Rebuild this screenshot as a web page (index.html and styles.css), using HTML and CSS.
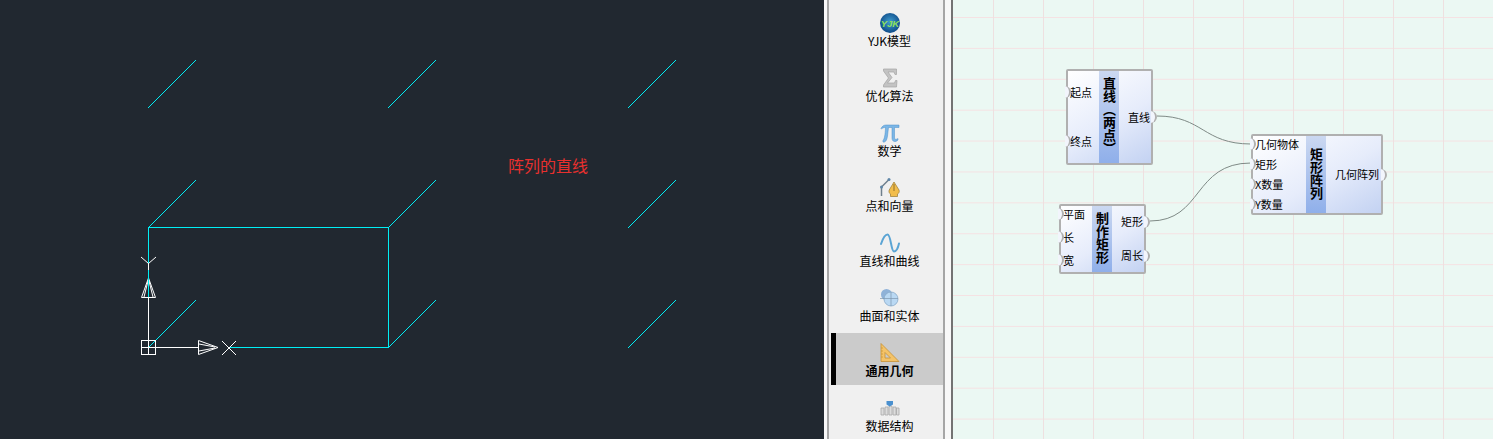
FILE: index.html
```html
<!DOCTYPE html>
<html lang="zh-CN">
<head>
  <meta charset="UTF-8">
  <title>矩形阵列</title>
  <link rel="stylesheet" href="styles.css">
</head>
<body>
  <div class="app">
    <div class="viewport">
      <svg class="cad" width="824" height="439" viewBox="0 0 824 439">
        <g class="cad-edge">
          <path d="M147.500 108.500L195.500 60.500M387.500 108.500L435.500 60.500M627.500 108.500L675.500 60.500"/>
          <path d="M147.500 228.500L195.500 180.500M387.500 228.500L435.500 180.500M627.500 228.500L675.500 180.500"/>
          <path d="M147.500 348.500L195.500 300.500M387.500 348.500L435.500 300.500M627.500 348.500L675.500 300.500"/>
          <path d="M148.500 227.500H388.500V347.500H229M148.500 227.500V263"/>
        </g>
        <g class="cad-ucs">
          <path class="crisp" d="M141.500 340.500H155.500V354.500H141.500ZM148.500 340.500V354.500M141.500 347.500H198M148.500 340V263"/>
          <path d="M141 257L148.500 263.500L156 257"/>
          <path d="M141.500 297.500H155.500L148.500 278ZM144 297L148 281M153 297L149 281"/>
          <path d="M198.500 340.500V354.500L218 347.500ZM199 344L215 347M199 351L215 348"/>
          <path d="M222 341L236 355M236 341L222 355"/>
        </g>
        <path class="cad-edge-top" d="M148.500 270V297"/>
        <text class="cad-label" x="508" y="172">阵列的直线</text>
      </svg>
    </div>

    <div class="toolbox">
      <div class="tabs">
        <div class="tab">
          <svg class="tab-icon" viewBox="0 0 20 20">
            <defs>
              <radialGradient id="globe" cx="50%" cy="45%" r="55%">
                <stop offset="0" stop-color="#3f9ed0"/>
                <stop offset="1" stop-color="#0d4a88"/>
              </radialGradient>
            </defs>
            <circle cx="10" cy="10" r="10" fill="url(#globe)"/>
            <text class="globe-text" x="10" y="13.500">YJK</text>
          </svg>
          <span>YJK模型</span>
        </div>
        <div class="tab">
          <svg class="tab-icon" viewBox="0 0 20 20">
            <path d="M3.500 1H16.500V6.500H15L14 4H8L12 9.500L7.500 15H14.500L15.500 12.500H17L16.500 19H3.500V17L8.500 10L3.500 3Z" fill="#c3c3c3" stroke="#a4a4a4" stroke-width=".7"/>
          </svg>
          <span>优化算法</span>
        </div>
        <div class="tab">
          <svg class="tab-icon" viewBox="0 0 20 20">
            <path d="M1 5.500C2 3.500 3.500 2 6 2H19V4.500H14.500V14C14.500 16.500 15.500 17 18 15.500V17C15.500 19.500 12 19 12 15V4.500H8.500L7.500 13C7 16.500 6 18.500 4.500 19C3 19.500 2.500 18.500 3 17.500C4.500 15.500 5.200 12 5.500 4.500C3.500 4.500 2.500 5 1.500 6Z" fill="#7bb6e6" stroke="#4a8fc8" stroke-width=".5"/>
          </svg>
          <span>数学</span>
        </div>
        <div class="tab">
          <svg class="tab-icon" viewBox="0 0 20 20">
            <path d="M1.500 18V9L9 1.500" fill="none" stroke="#6f7f8c" stroke-width="1.500"/>
            <circle cx="1.500" cy="9" r="1.500" fill="#5f86a8"/>
            <circle cx="9" cy="1.500" r="1.500" fill="#5f86a8"/>
            <path d="M14 4L19 12C19.800 14 18.500 15.500 17.500 16V18.500H10.500V16C9.500 15.500 8.500 14 9.200 12Z" fill="#f2bd4b" stroke="#9a7a32" stroke-width=".7"/>
            <path d="M14 6V13" stroke="#7a5d20" stroke-width=".8"/>
          </svg>
          <span>点和向量</span>
        </div>
        <div class="tab">
          <svg class="tab-icon" viewBox="0 0 20 20">
            <path d="M1 11C3 5 5 1.500 7.500 1.500C11 1.500 11 18.500 14 18.500C16 18.500 18 15 19 10.500" fill="none" stroke="#5aa4d4" stroke-width="2" stroke-linecap="round"/>
          </svg>
          <span>直线和曲线</span>
        </div>
        <div class="tab">
          <svg class="tab-icon" viewBox="0 0 20 20">
            <circle cx="6.500" cy="6.500" r="5.500" fill="#8fb2d8"/>
            <circle cx="11" cy="11" r="7" fill="#b9d8f3" stroke="#88a9c9" stroke-width=".8"/>
            <path d="M0 10.500H18M11 4V18" stroke="#7d96ad" stroke-width=".7"/>
          </svg>
          <span>曲面和实体</span>
        </div>
        <div class="tab tab-active">
          <svg class="tab-icon" viewBox="0 0 20 20">
            <path fill-rule="evenodd" d="M1 .5L19 18.500H1ZM5 9.500V15H10.500Z" fill="#f4c368" stroke="#c69236" stroke-width=".8"/>
            <path d="M1 5H3M1 8H3M1 11H3M1 14H3" stroke="#c69236" stroke-width=".7"/>
          </svg>
          <span>通用几何</span>
        </div>
        <div class="tab">
          <svg class="tab-icon" viewBox="0 0 20 20">
            <path d="M1 10H4V17H1ZM5 9H8V17H5ZM9 8H12V17H9ZM13 9H16V17H13ZM16.500 10H19V17H16.500Z" fill="#dcdcdc" stroke="#a8a8a8" stroke-width=".8"/>
            <path d="M6.500 3H13V6.500L9.750 8.500L6.500 6.500Z" fill="#4a90cf"/>
          </svg>
          <span>数据结构</span>
        </div>
      </div>
    </div>

    <div class="editor">
      <svg class="wires" width="540" height="439" viewBox="0 0 540 439">
        <path d="M204 116C250 116 250 144 298 144"/>
        <path d="M197 221C250 221 240 163 298 163"/>
      </svg>

      <div class="node node-line">
        <div class="ports ports-in">
          <div class="port">起点</div>
          <div class="port">终点</div>
        </div>
        <div class="node-name">直线（两点）</div>
        <div class="ports ports-out">
          <div class="port">直线</div>
        </div>
      </div>

      <div class="node node-rect">
        <div class="ports ports-in">
          <div class="port">平面</div>
          <div class="port">长</div>
          <div class="port">宽</div>
        </div>
        <div class="node-name">制作矩形</div>
        <div class="ports ports-out">
          <div class="port">矩形</div>
          <div class="port">周长</div>
        </div>
      </div>

      <div class="node node-array">
        <div class="ports ports-in">
          <div class="port">几何物体</div>
          <div class="port">矩形</div>
          <div class="port">X数量</div>
          <div class="port">Y数量</div>
        </div>
        <div class="node-name">矩形阵列</div>
        <div class="ports ports-out">
          <div class="port">几何阵列</div>
        </div>
      </div>
    </div>
  </div>
</body>
</html>
```

FILE: styles.css
```css
html, body {
  margin: 0;
  height: 100%;
  overflow: hidden;
}

body {
  font-family: "Noto Sans CJK SC", "Liberation Sans", sans-serif;
  color: #000;
}

.app {
  display: flex;
  height: 439px;
}

/* CAD viewport */
.viewport {
  width: 824px;
  flex: none;
  background-color: #212830;
}

.cad {
  display: block;
}

.cad path {
  fill: none;
  stroke-width: 1;
}

.cad .cad-edge-top,
.cad-edge path {
  stroke: #00eef4;
  shape-rendering: crispEdges;
}

.cad-ucs path {
  stroke: #fff;
}

.cad-ucs .crisp {
  shape-rendering: crispEdges;
}

.cad-label {
  fill: #e8302e;
  font-size: 16px;
}

/* component tabs */
.toolbox {
  width: 129px;
  flex: none;
  box-sizing: border-box;
  padding-left: 3px;
  background-color: #f8f8f8;
  border-right: 2px solid #737373;
}

.tabs {
  box-sizing: border-box;
  width: 118px;
  height: 100%;
  padding: 3px 0 0 2px;
  background-color: #f0f0f0;
  border-left: 2px solid #a6a6a6;
  border-right: 2px solid #a6a6a6;
  display: flex;
  flex-direction: column;
  gap: 3px;
}

.tab {
  flex: none;
  box-sizing: border-box;
  height: 52px;
  padding-top: 10px;
  border-left: 5px solid transparent;
  display: flex;
  flex-direction: column;
  align-items: center;
  font-size: 12px;
  line-height: 18px;
}

.tab span {
  margin-top: -1px;
}

.tab-active {
  background-color: #cbcbcb;
  border-left-color: #000;
  font-weight: bold;
}

.tab-icon {
  width: 20px;
  height: 20px;
  flex: none;
  margin-left: 1px;
}

.globe-text {
  fill: #8fe05a;
  font-size: 9.5px;
  font-weight: bold;
  font-style: italic;
  font-family: "Liberation Sans", sans-serif;
  text-anchor: middle;
}

/* node editor */
.editor {
  flex: 1;
  position: relative;
  background-color: #ebf8f3;
  background-image:
    linear-gradient(to right, #eee0e0 1px, transparent 1px),
    linear-gradient(to bottom, #f5e2e3 1px, transparent 1px);
  background-size: 50px 30.9px;
  background-position: 40px 17px;
}

.wires {
  position: absolute;
  left: 0;
  top: 0;
}

.wires path {
  fill: none;
  stroke: #7f8a86;
  stroke-width: 1;
}

.node {
  position: absolute;
  box-sizing: border-box;
  display: flex;
  border: 2px solid #b0b0b0;
  border-radius: 2px;
  font-size: 11px;
  line-height: 14px;
  background: linear-gradient(150deg, #ffffff 0%, #e6ecfb 55%, #c3d2f2 100%);
}

.node-line {
  left: 113px;
  top: 69px;
  width: 87px;
  height: 96px;
}

.node-rect {
  left: 106px;
  top: 204px;
  width: 87px;
  height: 70px;
}

.node-array {
  left: 298px;
  top: 134px;
  width: 132px;
  height: 81px;
}

.ports {
  display: flex;
  flex-direction: column;
  justify-content: center;
  white-space: nowrap;
  box-sizing: border-box;
}

.ports-in {
  width: 31px;
  padding: 0 0 2px 2px;
}

.ports-out {
  flex: 1;
  padding: 0 0 1px 9px;
  position: relative;
}

.node-line .ports-in {
  gap: 35px;
}

.node-rect .ports-in {
  gap: 9px;
  padding-bottom: 4px;
}

.node-rect .ports-out {
  gap: 20px;
  padding-bottom: 3px;
}

.node-array .ports-in {
  width: 53px;
  gap: 6px;
}

.port {
  position: relative;
}

.ports-in .port::before,
.ports-out .port::after {
  content: "";
  position: absolute;
  top: 1px;
  width: 4px;
  height: 12px;
  background-color: #f2f5fc;
  border-right: 2px solid #b0b0b0;
  border-radius: 0 6px 6px 0;
}

.ports-in .port::before {
  left: -5px;
}

.ports-out .port {
  position: static;
}

.ports-out .port::after {
  right: -6px;
}

.ports-out .port:first-child:last-child::after {
  top: 50%;
  margin-top: -6px;
}

.node-rect .ports-out .port:first-child::after {
  top: 10px;
}

.node-rect .ports-out .port:last-child::after {
  top: 44px;
}

.node-name {
  width: 20px;
  flex: none;
  box-sizing: border-box;
  padding-bottom: 2px;
  display: flex;
  align-items: center;
  justify-content: center;
  writing-mode: vertical-rl;
  font-size: 13px;
  line-height: 20px;
  font-weight: bold;
  color: #000;
  background: linear-gradient(to bottom, #cbd8f1, #8fafea);
}
```
